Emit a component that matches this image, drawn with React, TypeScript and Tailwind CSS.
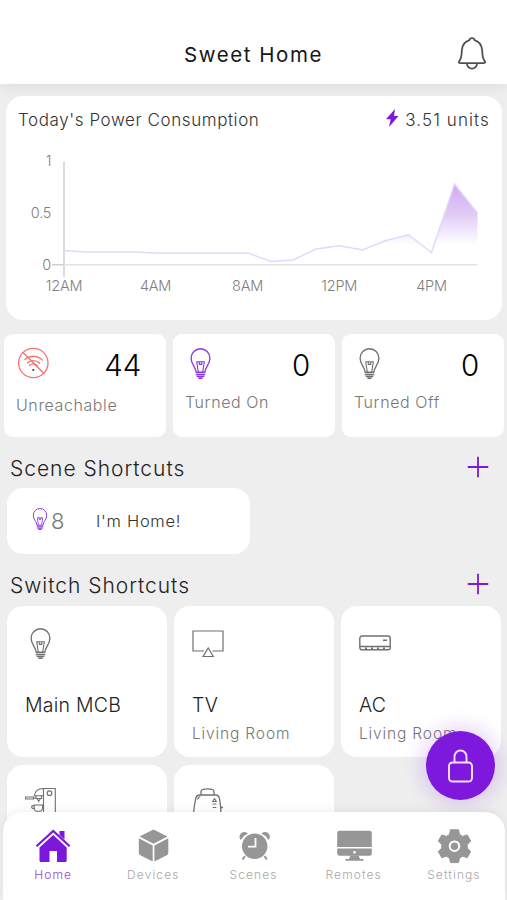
import type { ReactNode } from "react";

const BulbIcon = ({ className }: { className: string }) => {
  return (
    <svg
      viewBox="0 0 20 30"
      fill="none"
      stroke="currentColor"
      strokeWidth="1.300"
      strokeLinejoin="round"
      className={className}
    >
      <path d="M5.800 23.500C5.600 18.500 .9 16 .9 9.800a9.100 9.100 0 0 1 18.200 0C19.100 16 14.400 18.500 14.200 23.500Z" />
      <path d="M7.900 23.500 6.300 13.300h7.400L12.100 23.500M8.800 13.500v2.300h2.400v-2.300" strokeWidth="1.100" />
      <path d="M5.400 25.600h9.200" strokeWidth="1.500" />
      <path d="M6.300 27.500h7.400" strokeWidth="1.500" />
      <path d="M8 29.200h4" strokeWidth="1.600" />
    </svg>
  );
};

const BellIcon = () => {
  return (
    <svg
      viewBox="0 0 28 33"
      fill="none"
      stroke="currentColor"
      strokeWidth="1.800"
      strokeLinejoin="round"
      className="h-[33px] w-[28px] text-[#505050]"
    >
      <path d="M11.400 3.200C11.900 .5 16.100 .5 16.600 3.200C21.600 4.800 24 8.500 24.200 13.500C24.300 19 24.500 21.200 26.700 24.200C27.600 25.400 27 26.200 25.600 26.200H2.400C1 26.200 .4 25.400 1.300 24.200C3.500 21.200 3.700 19 3.800 13.500C4 8.500 6.400 4.800 11.400 3.200Z" />
      <path d="M9 26.500a5 5.200 0 0 0 10 0" />
    </svg>
  );
};

const NoWifiIcon = () => {
  return (
    <svg
      viewBox="0 0 32 32"
      fill="none"
      stroke="#f27370"
      strokeWidth="1.300"
      strokeLinecap="round"
      className="h-8 w-8"
    >
      <circle cx="16.300" cy="16" r="14.700" />
      <path d="M6 5.500l21 21" />
      <path d="M8 12.500c4-3.800 12.500-4.600 17.500 .6M10.500 10.700c4.500-2 10.500-1.500 14 1.500" />
      <path d="M10.500 16c2.800-3 8.500-3.300 12 .2M12.500 18.500c2.200-2.200 5.600-2.200 7.800 0" />
      <circle cx="16.300" cy="23" r="1.100" fill="#4a3434" stroke="none" />
    </svg>
  );
};

const TvIcon = () => {
  return (
    <svg
      viewBox="0 0 32 28"
      fill="none"
      stroke="#707070"
      strokeWidth="1.200"
      className="mt-[1.500px] h-[28px] w-[32px]"
    >
      <path d="M12 21H1V1h30v20H20.500" />
      <path d="M16.200 18 21.300 26.500h-10.200Z" />
    </svg>
  );
};

const AcIcon = () => {
  return (
    <svg
      viewBox="0 0 32 16"
      fill="none"
      stroke="#707070"
      strokeWidth="1.400"
      className="h-[16px] w-[32px]"
    >
      <rect x=".8" y="1" width="30.400" height="13.800" rx="2.200" />
      <path d="M1 11.500h30M24 5.200h4" />
      <path d="M6 13.200h20" strokeWidth="1.500" strokeDasharray="2 4" />
    </svg>
  );
};

const CoffeeIcon = () => {
  return (
    <svg
      viewBox="0 0 32 32"
      fill="none"
      stroke="#707070"
      strokeWidth="1.100"
      className="h-8 w-8"
    >
      <path d="M30.300 32V1.500H18c-4.500 0-8 2.800-8.700 7.300h9.200M18.500 1.500v31" />
      <path d="M.5 10h8v2H.5Z M8.500 11h2.500M11 8.800v2.700h5.500V8.800M12 11.500l1.700 3 1.700-3" />
      <circle cx="24.500" cy="6.200" r="2.300" />
      <path d="M9.200 18h8.300c.5 3.500-.5 6-2 6.200h-4.300c-1.500-.2-2.500-2.700-2-6.200ZM9 18.700c-3-.8-3.500 3 .8 3.200" />
    </svg>
  );
};

const ToasterIcon = () => {
  return (
    <svg
      viewBox="0 0 32 32"
      fill="none"
      stroke="#707070"
      strokeWidth="1.300"
      className="h-8 w-8"
    >
      <path d="M1 32 2.200 20 3.700 11.500C4.200 9 5.600 8 8 8h15.500c2.400 0 3.600 1.200 4 3.500L28.700 20 29 32" />
      <path d="M9 8V4.500C9 3.200 9.700 2.500 11 2.300c2.800-.5 6.200-.5 9 0 1.300.2 2 .9 2 2.200V8" />
      <path d="M5.500 12.500c.3-1.700 1.200-2.500 2.800-3M29 20.500h2" />
      <path d="M22.500 11.500l-1.800 3h3.600ZM20.500 17h4M20.700 20.500h3.600" strokeWidth="1.100" />
    </svg>
  );
};

const hourly = [
  [64, 250.5], [87, 252], [133, 252], [156, 253], [248, 253], [271, 261.500],
  [293, 260], [316, 249], [339, 245.800], [362.500, 250], [386, 240.500],
  [408.500, 234.800], [431.500, 252.500], [454.500, 184], [477.500, 213],
];

const axisLabels = [
  { x: 48.500, y: 166, text: "1" },
  { x: 41, y: 218, text: "0.5" },
  { x: 46.500, y: 270, text: "0" },
  { x: 64, y: 291, text: "12AM" },
  { x: 155.500, y: 291, text: "4AM" },
  { x: 247.500, y: 291, text: "8AM" },
  { x: 339.200, y: 291, text: "12PM" },
  { x: 431.500, y: 291, text: "4PM" },
];

const PowerChart = () => {
  const line = hourly.map((p) => p.join(",")).join(" ");
  return (
    <svg viewBox="6 144 495 166" className="h-[166px] w-[495px]">
      <defs>
        <linearGradient id="area" gradientUnits="userSpaceOnUse" x1="0" y1="184" x2="0" y2="245">
          <stop offset="0" stopColor="#7b1fd8" stopOpacity=".38" />
          <stop offset=".5" stopColor="#7b1fd8" stopOpacity=".23" />
          <stop offset="1" stopColor="#7b1fd8" stopOpacity="0" />
        </linearGradient>
      </defs>
      <path d="M64 161.500V277" stroke="#d8d8da" strokeWidth="1.800" />
      <path d="M52 264.800h12" stroke="#cfcfcf" strokeWidth="1.500" />
      <path d="M64 264.800h413.500" stroke="#e2e2e2" strokeWidth="1.500" />
      <polygon points={`64,264 ${line} 477.500,264`} fill="url(#area)" />
      <polyline points={line} fill="none" stroke="#e3d8fa" strokeWidth="1.400" />
      {axisLabels.map((label) => (
        <text
          key={label.text}
          x={label.x}
          y={label.y}
          textAnchor="middle"
          className="fill-[#808080] text-[14.500px] font-[330] tracking-[-0.250px]"
        >
          {label.text}
        </text>
      ))}
    </svg>
  );
};

const StatCard = ({
  icon,
  count,
  label,
  offset,
}: {
  icon: ReactNode;
  count: number;
  label: string;
  offset: string;
}) => {
  return (
    <div className="h-[103px] flex-1 rounded-[9px] bg-white pt-[13px] pr-[25px] pl-3">
      <div className="flex h-9 items-start justify-between">
        {icon}
        <span className="text-[29.500px] leading-9 font-light tracking-[-0.2px] text-black">
          {count}
        </span>
      </div>
      <p className={`text-[16px] leading-6 font-[330] tracking-[0.6px] text-[#777] ${offset}`}>
        {label}
      </p>
    </div>
  );
};

const SectionHeader = ({ title }: { title: string }) => {
  return (
    <div className="flex h-[34px] items-center justify-between pr-[18px] pl-[10px]">
      <h2 className="pt-px text-[21px] font-[330] tracking-[0.970px] text-[#222]">{title}</h2>
      <svg viewBox="0 0 22 22" stroke="#7b18db" strokeWidth="1.800" className="mb-[2px] h-[22px] w-[22px]">
        <path d="M11 .8v20.400M.8 11h20.400" />
      </svg>
    </div>
  );
};

const SwitchCard = ({
  icon,
  name,
  room,
}: {
  icon: ReactNode;
  name?: string;
  room?: string;
}) => {
  return (
    <div className="h-[151px] rounded-[16px] bg-white pt-[22px] pl-[18px]">
      <div className="flex h-[63px] items-start">{icon}</div>
      <p className="text-[19.500px] leading-7 font-[330] tracking-[0.250px] text-[#222]">{name}</p>
      <p className="text-[15.500px] leading-[30px] font-[330] tracking-[0.850px] whitespace-nowrap text-[#777]">
        {room}
      </p>
    </div>
  );
};

const tabs = [
  {
    label: "Home",
    icon: (
      <>
        <path d="M1.500 18.300 18.200 3l16.500 15.300" fill="none" stroke="currentColor" strokeWidth="2.200" />
        <path d="M24.500 3h5v8.500l-5-4.500ZM18.200 7 31.700 19.500v13a1.500 1.500 0 0 1-1.500 1.500H22V23h-7.500v11H6a1.500 1.500 0 0 1-1.500-1.500v-13Z" />
      </>
    ),
  },
  {
    label: "Devices",
    icon: (
      <path d="M18.500 1.500 32.500 8.500 18.500 15.700 4.500 8.500ZM3.800 10.300 17.700 17.500v16L5.300 27.300a2.800 2.800 0 0 1-1.500-2.500ZM33.300 10.300 19.400 17.500v16l12.400-6.200a2.800 2.800 0 0 0 1.500-2.500Z" />
    ),
  },
  {
    label: "Scenes",
    icon: (
      <>
        <path d="M4.700 12A4.600 4.600 0 1 1 12 5.600 15.500 15.500 0 0 0 4.700 12ZM32.700 12A4.600 4.600 0 1 0 25.400 5.600 15.500 15.500 0 0 1 32.700 12Z" />
        <circle cx="18.700" cy="18.300" r="12.700" />
        <path d="m9 28-2.500 3.500M28.400 28l2.500 3.500" stroke="currentColor" strokeWidth="2" />
        <path d="M19.500 10v8.700H12" fill="none" stroke="#fff" strokeWidth="1.800" />
      </>
    ),
  },
  {
    label: "Remotes",
    icon: (
      <>
        <path d="M3.500 2.800h30A2.300 2.300 0 0 1 35.800 5v14H1.200V5a2.300 2.300 0 0 1 2.300-2.200ZM1.200 20.500h34.600v5a2.300 2.300 0 0 1-2.300 2.300h-30a2.300 2.300 0 0 1-2.300-2.300Z" />
        <path d="M14.500 27.500h8l1.500 3.500h3.500v1.800H9.500V31H13Z" />
        <circle cx="18.500" cy="24.200" r="1.300" fill="#fff" />
      </>
    ),
  },
  {
    label: "Settings",
    icon: (
      <>
        <path
          d="M14.500 1.800h8l1 4.700 3.200 1.900 4.500-1.500 3.500 6.200-3.500 3.400v3.600l3.500 3.400-3.500 6.200-4.500-1.500-3.200 1.900-1 4.500h-8l-1-4.500-3.200-1.900-4.500 1.500-3.500-6.200 3.500-3.400v-3.600l-3.500-3.400 3.500-6.200 4.500 1.500 3.200-1.900Z"
          stroke="currentColor"
          strokeLinejoin="round"
        />
        <circle cx="18.500" cy="18.200" r="4.800" fill="none" stroke="#fff" strokeWidth="2" />
      </>
    ),
  },
];

const App = () => {
  return (
    <div className="relative flex h-[900px] w-[507px] flex-col overflow-hidden bg-[#eeeeee] font-['Inter',sans-serif]">
      <header className="grid h-[84px] shrink-0 grid-cols-[1fr_auto_1fr] items-center bg-white pt-[24px] shadow-[0_2px_14px_rgba(0,0,0,0.08)]">
        <span />
        <h1 className="pt-[2px] text-[20.500px] tracking-[1.550px] text-[#161616]">Sweet Home</h1>
        <div className="flex justify-end pr-[21px] pb-[2px]">
          <BellIcon />
        </div>
      </header>

      <section className="mr-[5px] ml-[6px] mt-3 h-[224px] shrink-0 rounded-[17px] bg-white">
        <div className="flex h-12 items-center justify-between px-3">
          <p className="pt-[2px] text-[17px] font-[330] tracking-[0.580px] text-[#333]">
            Today's Power Consumption
          </p>
          <div className="flex items-center gap-[6px]">
            <svg viewBox="0 0 12 18" className="mb-[5px] h-[18px] w-[14px] fill-[#7b18db]">
              <path d="M9 0 0 10.300h4.700L3 18 12.500 7H8Z" />
            </svg>
            <span className="pt-[2px] text-[17px] font-[330] tracking-[1.100px] text-[#333]">
              3.51 units
            </span>
          </div>
        </div>
        <PowerChart />
      </section>

      <section className="mr-[3px] ml-[4px] mt-[14px] flex shrink-0 gap-[7px]">
        <StatCard
          icon={
            <div className="pl-[1px]">
              <NoWifiIcon />
            </div>
          }
          count={44}
          label="Unreachable"
          offset="pt-[10px]"
        />
        <StatCard
          icon={<BulbIcon className="ml-[5px] mt-px h-[31px] w-[21px] text-[#8936dc]" />}
          count={0}
          label="Turned On"
          offset="pt-[7px]"
        />
        <StatCard
          icon={<BulbIcon className="ml-[5px] mt-px h-[31px] w-[21px] text-[#707070]" />}
          count={0}
          label="Turned Off"
          offset="pt-[7px]"
        />
      </section>

      <section className="mt-[14px] shrink-0">
        <SectionHeader title="Scene Shortcuts" />
        <div className="mt-[3px] ml-[7px] flex h-[66px] w-[243px] items-center rounded-[16px] bg-white pl-[25px]">
          <BulbIcon className="mb-1 h-[22px] w-[16px] text-[#8936dc]" />
          <span className="ml-[3px] w-[45px] pt-px text-[22px] font-[330] text-[#777]">8</span>
          <span className="text-[16.500px] font-[330] tracking-[0.7px] text-[#333]">I'm Home!</span>
        </div>
      </section>

      <section className="mt-[14px] shrink-0">
        <SectionHeader title="Switch Shortcuts" />
        <div className="mx-[7px] mt-[4px] grid grid-cols-[160px_160px_160px] gap-x-[7px] gap-y-[8px]">
          <SwitchCard
            icon={<BulbIcon className="ml-[5px] h-[31px] w-[21px] text-[#707070]" />}
            name="Main MCB"
          />
          <SwitchCard icon={<TvIcon />} name="TV" room="Living Room" />
          <SwitchCard
            icon={
              <div className="pt-[7px]">
                <AcIcon />
              </div>
            }
            name="AC"
            room="Living Room"
          />
          <SwitchCard icon={<CoffeeIcon />} />
          <SwitchCard icon={<ToasterIcon />} />
        </div>
      </section>

      <button className="absolute top-[731px] left-[426px] flex h-[69px] w-[69px] items-center justify-center rounded-full bg-[#7d18dc] shadow-[0_0_20px_4px_rgba(125,24,220,0.2)]">
        <svg
          viewBox="0 0 25 34"
          fill="none"
          stroke="#f3e3ff"
          strokeWidth="1.900"
          className="h-[34px] w-[25px]"
        >
          <rect x="1" y="13.500" width="23" height="19" rx="3.500" />
          <path d="M6.500 13.500V7.500a6 6 0 0 1 12 0v6" />
        </svg>
      </button>

      <nav className="absolute top-[812px] right-[2px] left-[3px] flex h-[88px] rounded-t-[20px] bg-white pr-[1px] shadow-[0_-2px_10px_rgba(0,0,0,0.06)]">
        {tabs.map((tab) => (
          <div
            key={tab.label}
            className={`flex flex-1 flex-col items-center pt-4 ${
              tab.label === "Home" ? "text-[#7b18db]" : "text-[#969696]"
            }`}
          >
            <svg viewBox="0 0 36 36" fill="currentColor" className="h-9 w-9">
              {tab.icon}
            </svg>
            <span
              className={`mt-[3px] text-[12px] leading-4 font-[350] tracking-[1.100px] ${
                tab.label === "Home" ? "text-[#9445e0]" : "text-[#a8a8a8]"
              }`}
            >
              {tab.label}
            </span>
          </div>
        ))}
      </nav>
    </div>
  );
};

export default App;
